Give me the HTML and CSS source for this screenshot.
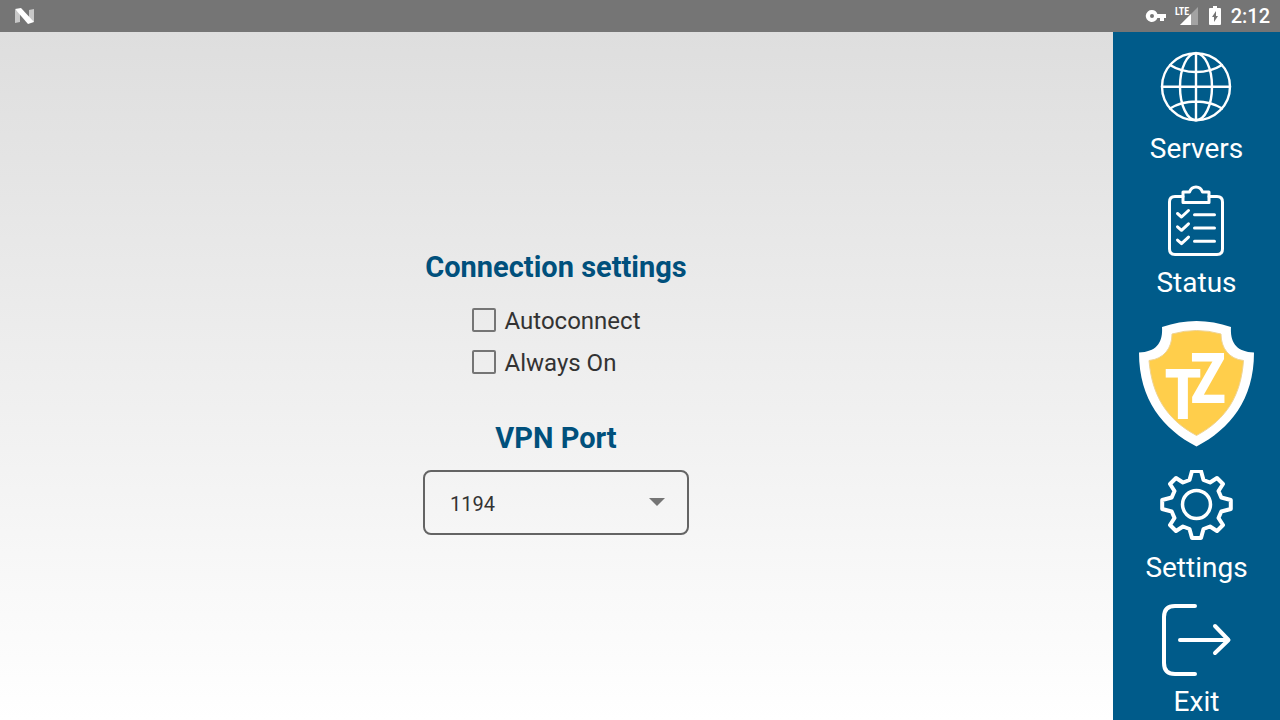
FILE: index.html
```html
<!DOCTYPE html>
<html lang="en">
<head>
<meta charset="utf-8">
<meta name="viewport" content="width=device-width, initial-scale=1">
<title>Settings</title>
<link rel="stylesheet" href="styles.css">
</head>
<body>
<header class="status-bar">
  <svg class="notification" width="20" height="16" viewBox="0 0 20 16" aria-hidden="true">
    <path d="M0 2L5 3V14L0 15ZM14 2L19 1V14L14 13Z" fill="#c8c8c8"/>
    <path d="M0 1L6 0L19 14L13 16Z" fill="#fff"/>
  </svg>
  <div class="system">
    <svg width="20" height="12" viewBox="0 0 20 12" aria-hidden="true">
      <path fill="#fff" fill-rule="evenodd" d="M6 0a6 6 0 1 0 5.4 8H14v3h4V8h2V4h-8.6A6 6 0 0 0 6 0ZM6 4a2 2 0 1 1 0 4a2 2 0 0 1 0-4Z"/>
    </svg>
    <svg width="23" height="20" viewBox="0 0 23 20" aria-hidden="true">
      <path d="M22 1V19H4Z" fill="#a3a3a3"/>
      <path d="M15 8V19H4Z" fill="#fff"/>
      <text class="lte" x="-1" y="9">LTE</text>
    </svg>
    <svg width="12" height="20" viewBox="0 0 12 20" aria-hidden="true">
      <path fill="#fff" fill-rule="evenodd" d="M4 0h4v2h3q1 0 1 1v15q0 1-1 1H1q-1 0-1-1V3q0-1 1-1h3ZM7 5L3 11h2v5l4-6H7Z"/>
    </svg>
    <time class="clock">2:12</time>
  </div>
</header>
<div class="screen">
  <main class="content">
    <form class="form">
      <h1 class="heading">Connection settings</h1>
      <div class="options">
        <label class="option"><input class="checkbox" type="checkbox" name="autoconnect"><span class="option-text">Autoconnect</span></label>
        <label class="option"><input class="checkbox" type="checkbox" name="always-on"><span class="option-text">Always On</span></label>
      </div>
      <h2 class="heading"><label for="port">VPN Port</label></h2>
      <div class="picker">
        <select class="select" id="port" name="port"><option>1194</option></select>
        <svg class="arrow" width="16" height="10" viewBox="0 0 16 10" aria-hidden="true"><path d="M0 0H16L8 8Z" fill="#757575"/></svg>
      </div>
    </form>
  </main>
  <nav class="sidebar">
    <a class="item" href="#servers">
      <svg class="icon" width="81" height="72" viewBox="0 0 81 72" aria-hidden="true" stroke-width="2.4">
        <ellipse cx="40" cy="35.7" rx="34" ry="33.5"/>
        <ellipse cx="40" cy="35.7" rx="16" ry="33.5"/>
        <path d="M40 2V69M6 35.7H74M14 14Q25 21 40 21Q55 21 66 14M14 57.5Q25 50.5 40 50.5Q55 50.5 66 57.5"/>
      </svg>
      <span>Servers</span>
    </a>
    <a class="item" href="#status">
      <svg class="icon" width="81" height="72" viewBox="0 0 81 72" aria-hidden="true" stroke-width="3">
        <path d="M27 11.5H19Q13.5 11.5 13.5 17V64Q13.5 69.5 19 69.5H61Q66.5 69.5 66.5 64V17Q66.5 11.5 61 11.5H53"/>
        <path d="M27 7H33.5C34.5 4 36.5 2 40 2S45.5 4 46.5 7H53V17.5H27Z"/>
        <path d="M21.5 28.5L25.5 32L32.500 25.5M21.5 41.8L25.5 45.3L32.5 38.8M21.5 55.1L25.5 58.6L32.5 52.1M38.5 29.7H58.5M38.5 43H58.5M38.5 56.3H58.5"/>
      </svg>
      <span>Status</span>
    </a>
    <a class="item" href="#home" aria-label="TZ">
      <svg width="117" height="131" viewBox="0 0 117 131" aria-hidden="true">
        <path d="M24 8Q58.5-4 93 8C92 23 98 33 116 33.5C116 81 92 110 58.5 127.5C25 110 1 81 1 33.5C19 33 25 23 24 8Z" fill="#fff"/>
        <path d="M34 15Q58.5 8 83 15C83 29 91 40 105.5 41.5C103 76 89 100 58.5 116.5C28 100 14 76 11 41.5C26 40 34 29 34 15Z" fill="#ffce4b" stroke="#efd391"/>
        <text class="mark" x="45" y="100">T</text>
        <text class="mark" x="70" y="84">Z</text>
      </svg>
    </a>
    <a class="item" href="#settings">
      <svg class="icon" width="81" height="72" viewBox="0 0 81 72" aria-hidden="true" stroke-width="4">
        <g transform="translate(40.5 34.5)">
          <circle r="14" stroke-width="3.5"/>
          <path d="M-4.5-33.5H4.5L7-24.5L13.5-22L20.5-26.5L26.5-20.5L22-13.5L24.8-7L34.3-4.5V4.5L24.8 7L22 13.5L26.5 20.5L20.5 26.5L13.5 22L7 24.5L4.5 33.5H-4.5L-7 24.5L-13.5 22L-20.5 26.5L-26.5 20.5L-22 13.5L-24.8 7L-34.3 4.5V-4.5L-24.8-7L-22-13.5L-26.5-20.5L-20.5-26.5L-13.5-22L-7-24.5Z"/>
        </g>
      </svg>
      <span>Settings</span>
    </a>
    <a class="item" href="#exit">
      <svg class="icon" width="81" height="72" viewBox="0 0 81 72" aria-hidden="true" stroke-width="4">
        <path d="M39 2H19Q8 2 8 13V59Q8 70 19 70H39M24 36H72M59 22L72.5 36L59 49"/>
      </svg>
      <span>Exit</span>
    </a>
  </nav>
</div>
</body>
</html>
```
FILE: styles.css
```css
* { box-sizing: border-box; }

body {
  margin: 0;
  min-height: 100vh;
  display: flex;
  flex-direction: column;
  font-family: Roboto, sans-serif;
  color: #333;
}

.status-bar {
  height: 32px;
  padding: 0 10px 0 15px;
  display: flex;
  align-items: center;
  justify-content: space-between;
  background: #757575;
  color: #fff;
}

.system {
  display: flex;
  align-items: center;
  gap: 10px;
}

.system svg { overflow: visible; }

.lte {
  font: bold 10px "Liberation Sans Narrow", "Roboto Condensed", Roboto, sans-serif;
  fill: #fff;
}

.clock {
  font-size: 20px;
  font-weight: 500;
  line-height: 32px;
}

.screen {
  flex: 1;
  display: flex;
}

.content {
  flex: 1;
  display: flex;
  align-items: center;
  justify-content: center;
  padding: 32px 1px 0 0;
  background: linear-gradient(#dedede, #fff);
}

.form {
  width: 266px;
  display: flex;
  flex-direction: column;
}

.heading {
  margin: 0;
  font-size: 29px;
  font-weight: 700;
  line-height: 36px;
  text-align: center;
  white-space: nowrap;
  color: #00507c;
}

.options {
  align-self: center;
  margin: 14px 0 37px;
}

.option {
  display: flex;
  align-items: center;
  gap: 9px;
  font-size: 24px;
}

.option-text {
  padding-top: 2px;
  line-height: 40px;
}

.checkbox {
  appearance: none;
  width: 24px;
  height: 24px;
  margin: 0;
  border: 2px solid #757575;
  border-radius: 2px;
}

.checkbox:checked { background: #00507c; }

.picker {
  margin-top: 14px;
  display: grid;
  align-items: center;
}

.select {
  grid-area: 1 / 1;
  appearance: none;
  width: 100%;
  height: 65px;
  padding: 2px 25px 0;
  border: 2px solid #646464;
  border-radius: 8px;
  background: transparent;
  font: 20px Roboto, sans-serif;
  color: #333;
}

.arrow {
  grid-area: 1 / 1;
  justify-self: end;
  margin-right: 24px;
  pointer-events: none;
}

.sidebar {
  width: 167px;
  padding-top: 19px;
  display: flex;
  flex-direction: column;
  gap: 20px;
  background: #005b8a;
}

.item {
  display: flex;
  flex-direction: column;
  align-items: center;
  gap: 10px;
  font-size: 28px;
  line-height: 32px;
  color: #fff;
  text-decoration: none;
}

.icon {
  fill: none;
  stroke: #fff;
  stroke-linecap: round;
  stroke-linejoin: round;
}

.mark {
  font: bold 70px "Liberation Sans Narrow", "Roboto Condensed", Roboto, sans-serif;
  text-anchor: middle;
  fill: #fff;
}
```
